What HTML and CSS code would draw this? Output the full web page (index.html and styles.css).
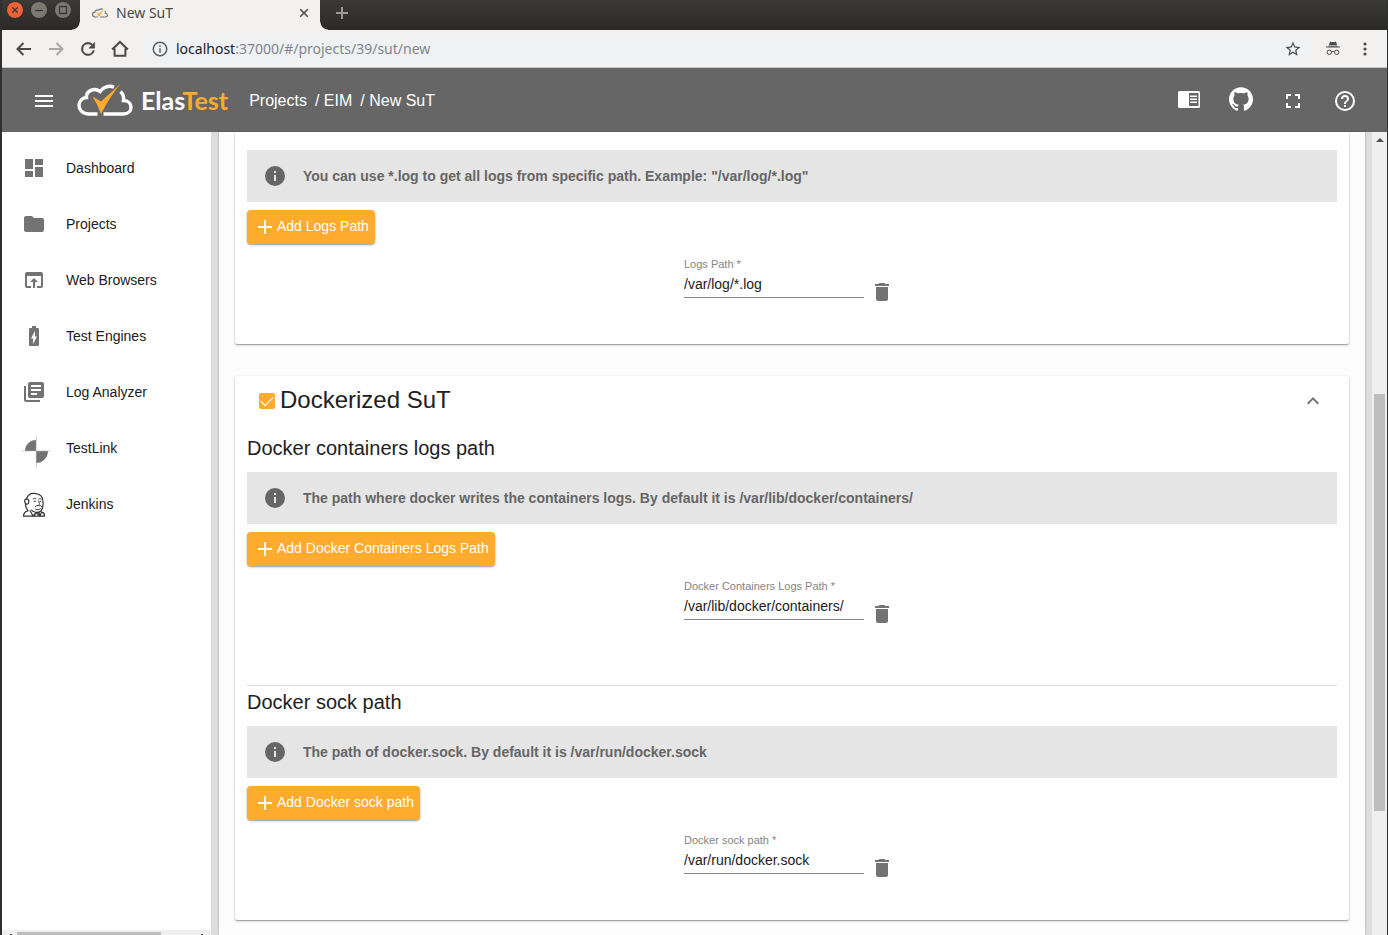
FILE: index.html
```html
<!DOCTYPE html>
<html lang="en">
<head>
<meta charset="utf-8">
<title>New SuT</title>
<link rel="stylesheet" href="styles.css">
</head>
<body>
<div class="window">
  <header class="titlebar">
    <div class="window-controls">
      <button class="win-btn win-close" aria-label="Close window"><svg viewBox="0 0 16 16"><path d="M5.2 5.2l5.6 5.6M10.8 5.2l-5.6 5.6"/></svg></button>
      <button class="win-btn" aria-label="Minimize"><svg viewBox="0 0 16 16"><path d="M4 8.5h8"/></svg></button>
      <button class="win-btn" aria-label="Maximize"><svg viewBox="0 0 16 16"><path d="M4.5 4.5h7v7h-7z"/></svg></button>
    </div>
    <div class="tab">
      <svg class="favicon" viewBox="0 0 56 34"><path d="M20 31H12C5 31 2 26 2 22c0-5 4-8 8-8 0-6 7-10 13-7C27 3 33 2 38 3M45 9c2 3 3 6 2 9 5 0 7 4 7 7 0 4-4 6-7 6H28" fill="none" stroke="#777" stroke-width="4"/><path d="M15 13l9 7L44 0 24 31z" fill="#ffab2e"/></svg>
      <span class="tab-title">New SuT</span>
      <button class="tab-close" aria-label="Close tab"><svg viewBox="0 0 10 10"><path d="M1.2 1.2l7.6 7.6M8.8 1.2L1.2 8.8"/></svg></button>
    </div>
    <button class="tab-new" aria-label="New tab"><svg viewBox="0 0 12 12"><path d="M6 0v12M0 6h12"/></svg></button>
  </header>

  <div class="toolbar">
    <button class="nav-btn" aria-label="Back"><svg viewBox="0 0 24 24"><path d="M20.500 10.700H7.200l5-5L10.500 4l-8 8 8 8 1.700-1.700-5-5h13.300z"/></svg></button>
    <button class="nav-btn disabled" aria-label="Forward" disabled><svg viewBox="0 0 24 24"><path d="M3.500 10.700h13.300l-5-5L13.500 4l8 8-8 8-1.700-1.700 5-5H3.500z"/></svg></button>
    <button class="nav-btn" aria-label="Reload"><svg viewBox="0 0 24 24"><path stroke="currentColor" stroke-width=".6" d="M17.650 6.350A7.960 7.960 0 0 0 12 4a8 8 0 1 0 7.730 10h-2.080A6 6 0 1 1 12 6c1.660 0 3.140.690 4.220 1.780L13 11h7V4z"/></svg></button>
    <button class="nav-btn" aria-label="Home"><svg viewBox="0 0 24 24"><path d="M2.500 12.500L12 3.500l9.500 9M5.500 11.500V20h13v-8.500" fill="none" stroke="currentColor" stroke-width="2.400"/></svg></button>
    <div class="address">
      <svg class="address-info" viewBox="0 0 24 24"><path d="M11 7h2v2h-2zm0 4h2v6h-2zm1-9a10 10 0 1 0 0 20 10 10 0 0 0 0-20zm0 18a8 8 0 1 1 0-16 8 8 0 0 1 0 16z"/></svg>
      <span class="url"><span class="url-host">localhost</span>:37000/#/projects/39/sut/new</span>
      <button class="star" aria-label="Bookmark"><svg viewBox="0 0 24 24"><path d="M22 9.240l-7.190-.620L12 2 9.190 8.630 2 9.240l5.460 4.730L5.820 21 12 17.270 18.180 21l-1.630-7.030zM12 15.400l-3.760 2.270 1-4.280-3.320-2.880 4.380-.380L12 6.100l1.710 4.040 4.380.380-3.320 2.880 1 4.280z"/></svg></button>
    </div>
    <svg class="incognito" viewBox="0 0 16 16"><path d="M5 .5l1.800.8L8 .9l1.200.4L11 .5l1 3.500H4zM1 5.500h14v1H1z"/><path d="M3.500 4.600h9v1h-9z"/><g fill="none" stroke="currentColor"><circle cx="4.300" cy="11.300" r="2.200"/><circle cx="11.700" cy="11.300" r="2.200"/><path d="M6.500 10.800q1.500-.8 3 0"/></g></svg>
    <button class="chrome-menu" aria-label="Browser menu"><svg viewBox="0 0 4 16"><circle cx="2" cy="3" r="1.600"/><circle cx="2" cy="8" r="1.600"/><circle cx="2" cy="13" r="1.600"/></svg></button>
  </div>

  <div class="appbar">
    <button class="icon-btn" aria-label="Toggle menu"><svg viewBox="0 0 24 24"><path d="M3 18h18v-2H3zm0-5h18v-2H3zm0-7v2h18V6z"/></svg></button>
    <a class="logo" href="#">
      <svg class="logo-mark" viewBox="0 0 56 34"><path d="M20.500 31H12C5 31 2 26 2 22.500 2 18 5.500 14.500 9.500 14.500 9 8 17 4 23 8.500 26 4 32 2 37 4.200M43.500 8.500c3 3 3.500 6 3 9 5 0 7.500 3.500 7.500 7 0 4-3.500 6.500-7.500 6.500H26.500" fill="none" stroke="#fff" stroke-width="3.400"/><path d="M15.500 13.500L24 18.500 44 .5Q33 13 24 31 20.500 21 15.500 13.500z" fill="#ffab2e"/></svg>
      <span class="logo-text">Elas<span class="logo-accent">Test</span></span>
    </a>
    <nav class="breadcrumb" aria-label="Breadcrumb"><a href="#">Projects</a><a href="#">/ EIM</a><a href="#">/ New SuT</a></nav>
    <div class="actions">
      <button class="icon-btn raised" aria-label="Reader"><svg viewBox="0 0 24 24"><path fill-rule="evenodd" d="M2.500 4h19q1.500 0 1.500 1.500v14q0 1.500-1.500 1.500h-19Q1 21 1 19.500v-14Q1 4 2.500 4zM12 6v13h9.500V6zM13 8.500h7V10h-7zm0 3h7V13h-7zm0 3h7V16h-7z"/></svg></button>
      <button class="icon-btn raised" aria-label="GitHub"><svg viewBox="0 0 24 24"><path d="M12 .297c-6.630 0-12 5.373-12 12 0 5.303 3.438 9.800 8.205 11.385.6.113.820-.258.820-.577 0-.285-.010-1.040-.015-2.040-3.338.724-4.042-1.610-4.042-1.610C4.422 18.070 3.633 17.700 3.633 17.700c-1.087-.744.084-.729.084-.729 1.205.084 1.838 1.236 1.838 1.236 1.070 1.835 2.809 1.305 3.495.998.108-.776.417-1.305.760-1.605-2.665-.300-5.466-1.332-5.466-5.930 0-1.310.465-2.380 1.235-3.220-.135-.303-.540-1.523.105-3.176 0 0 1.005-.322 3.300 1.230.960-.267 1.980-.399 3-.405 1.020.006 2.040.138 3 .405 2.280-1.552 3.285-1.230 3.285-1.230.645 1.653.240 2.873.120 3.176.765.840 1.230 1.910 1.230 3.220 0 4.610-2.805 5.625-5.475 5.920.420.360.810 1.096.810 2.220 0 1.606-.015 2.896-.015 3.286 0 .315.210.690.825.570C20.565 22.092 24 17.592 24 12.297c0-6.627-5.373-12-12-12"/></svg></button>
      <button class="icon-btn" aria-label="Fullscreen"><svg viewBox="0 0 24 24"><path d="M7 14H5v5h5v-2H7zM5 10h2V7h3V5H5zm12 7h-3v2h5v-5h-2zM14 5v2h3v3h2V5z"/></svg></button>
      <button class="icon-btn" aria-label="Help"><svg viewBox="0 0 24 24"><path d="M11 18h2v-2h-2zm1-16a10 10 0 1 0 0 20 10 10 0 0 0 0-20zm0 18a8 8 0 1 1 0-16 8 8 0 0 1 0 16zm0-14a4 4 0 0 0-4 4h2a2 2 0 1 1 4 0c0 2-3 1.750-3 5h2c0-2.250 3-2.500 3-5a4 4 0 0 0-4-4z"/></svg></button>
    </div>
  </div>

  <div class="body">
    <aside class="sidebar">
      <nav class="menu">
        <a href="#"><svg viewBox="0 0 24 24"><path d="M3 13h8V3H3zm0 8h8v-6H3zm10 0h8V11h-8zm0-18v6h8V3z"/></svg>Dashboard</a>
        <a href="#"><svg viewBox="0 0 24 24"><path d="M10 4H4a2 2 0 0 0-2 2v12a2 2 0 0 0 2 2h16a2 2 0 0 0 2-2V8a2 2 0 0 0-2-2h-8z"/></svg>Projects</a>
        <a href="#"><svg viewBox="0 0 24 24"><path d="M19 4H5a2 2 0 0 0-2 2v12a2 2 0 0 0 2 2h4v-2H5V8h14v10h-4v2h4a2 2 0 0 0 2-2V6a2 2 0 0 0-2-2zm-7 6l-4 4h3v6h2v-6h3z"/></svg>Web Browsers</a>
        <a href="#"><svg viewBox="0 0 24 24"><path d="M15.670 4H14V2h-4v2H8.330C7.600 4 7 4.600 7 5.330v15.330C7 21.400 7.600 22 8.330 22h7.330c.740 0 1.340-.600 1.340-1.330V5.330C17 4.600 16.400 4 15.670 4zM11 20v-5.500H9L13 7v5.500h2z"/></svg>Test Engines</a>
        <a href="#"><svg viewBox="0 0 24 24"><path d="M4 6H2v14a2 2 0 0 0 2 2h14v-2H4zm16-4H8a2 2 0 0 0-2 2v12a2 2 0 0 0 2 2h12a2 2 0 0 0 2-2V4a2 2 0 0 0-2-2zm-1 9H9V9h10zm-4 4H9v-2h6zm4-8H9V5h10z"/></svg>Log Analyzer</a>
        <a href="#"><svg viewBox="0 0 24 24" overflow="visible"><path d="M14 15V4A11 11 0 0 0 3 15zM14 15v12A12 12 0 0 0 26 15z"/><path d="M0 15h28M14.300 0v32" stroke="#bbb" stroke-width=".6"/></svg>TestLink</a>
        <a href="#"><svg viewBox="0 0 24 24" overflow="visible"><g transform="translate(0 .8)" fill="none" stroke="#333" stroke-width="1.200" stroke-linecap="round"><path d="M6 18C4 15 3 13 3.500 10.500 2 9 2.500 6.500 4.500 6 6 1.500 10 0 14 .8c5 .7 7 4.200 7 8.200.3 4 .4 7-2.500 9.500-3 2-7 1-9-1.200M4.500 6C7 6 7 8 6.500 10M3.500 10.500Q5 12 6.500 10.500M6 18C3 18.500 1.500 20 1.500 23.400h21c.3-2-.5-3.500-3-4"/><path d="M11 6q1.500-1.300 3 0M17 6q1.500-.8 2.500.3M12 8.500h1.500M18 8.500h1M16.500 8q2 3 .5 4.500M13 14q2-2.500 4-1 2-1 3 1M13.500 16.500q2.500 1.500 5-.500" stroke-width=".9"/><path d="M8 18l3 5 3-3 4 3.300 1.500-4M14 20l-2 3M15 20.500l2-.5 1 3" stroke-width="1.200"/></g></svg>Jenkins</a>
      </nav>
      <div class="hscroll"><svg viewBox="0 0 2 1"><path d="M0 0h2v1H0z"/></svg><span class="hthumb"></span><svg viewBox="0 0 2 1"><path d="M0 0h2v1H0z"/></svg></div>
    </aside>

    <main class="content">
      <section class="card card-top">
        <div class="info"><svg viewBox="0 0 24 24"><path d="M12 2a10 10 0 1 0 0 20 10 10 0 0 0 0-20zm1 15h-2v-6h2zm0-8h-2V7h2z"/></svg>You can use *.log to get all logs from specific path. Example: "/var/log/*.log"</div>
        <button class="add"><svg viewBox="0 0 24 24"><path d="M19 14h-6v6h-2v-6H5v-2h6V6h2v6h6z"/></svg>Add Logs Path</button>
        <div class="row">
          <div class="field"><label for="logs">Logs Path *</label><input id="logs" type="text" value="/var/log/*.log"></div>
          <button class="delete" aria-label="Delete"><svg viewBox="0 0 24 24"><path d="M6 19a2 2 0 0 0 2 2h8a2 2 0 0 0 2-2V7H6zM19 4h-3.500l-1-1h-5l-1 1H5v2h14z"/></svg></button>
        </div>
      </section>

      <section class="card">
        <div class="card-head">
          <input type="checkbox" id="dockerized" class="check" checked>
          <label for="dockerized">Dockerized SuT</label>
          <button class="collapse" aria-label="Collapse"><svg viewBox="0 0 24 24"><path d="M12 9l-6 6 1.400 1.400L12 11.800l4.600 4.600L18 15z"/></svg></button>
        </div>
        <div class="group">
          <h2>Docker containers logs path</h2>
          <div class="info"><svg viewBox="0 0 24 24"><path d="M12 2a10 10 0 1 0 0 20 10 10 0 0 0 0-20zm1 15h-2v-6h2zm0-8h-2V7h2z"/></svg>The path where docker writes the containers logs. By default it is /var/lib/docker/containers/</div>
          <button class="add"><svg viewBox="0 0 24 24"><path d="M19 14h-6v6h-2v-6H5v-2h6V6h2v6h6z"/></svg>Add Docker Containers Logs Path</button>
          <div class="row">
            <div class="field"><label for="containers">Docker Containers Logs Path *</label><input id="containers" type="text" value="/var/lib/docker/containers/"></div>
            <button class="delete" aria-label="Delete"><svg viewBox="0 0 24 24"><path d="M6 19a2 2 0 0 0 2 2h8a2 2 0 0 0 2-2V7H6zM19 4h-3.500l-1-1h-5l-1 1H5v2h14z"/></svg></button>
          </div>
        </div>
        <div class="group">
          <h2>Docker sock path</h2>
          <div class="info"><svg viewBox="0 0 24 24"><path d="M12 2a10 10 0 1 0 0 20 10 10 0 0 0 0-20zm1 15h-2v-6h2zm0-8h-2V7h2z"/></svg>The path of docker.sock. By default it is /var/run/docker.sock</div>
          <button class="add"><svg viewBox="0 0 24 24"><path d="M19 14h-6v6h-2v-6H5v-2h6V6h2v6h6z"/></svg>Add Docker sock path</button>
          <div class="row">
            <div class="field"><label for="sock">Docker sock path *</label><input id="sock" type="text" value="/var/run/docker.sock"></div>
            <button class="delete" aria-label="Delete"><svg viewBox="0 0 24 24"><path d="M6 19a2 2 0 0 0 2 2h8a2 2 0 0 0 2-2V7H6zM19 4h-3.500l-1-1h-5l-1 1H5v2h14z"/></svg></button>
          </div>
        </div>
      </section>
    </main>
    <div class="vscroll"><svg viewBox="0 0 8 4"><path d="M0 4l4-4 4 4z"/></svg><span class="vthumb"></span></div>
  </div>
</div>
</body>
</html>
```
FILE: styles.css
```css
* { box-sizing: border-box; }
body { margin: 0; font: 14px/20px "Liberation Sans", Arial, sans-serif; color: #212121; }
button { border: 0; padding: 0; background: none; font: inherit; color: inherit; }
a { color: inherit; text-decoration: none; }
svg { display: block; fill: currentColor; flex: none; }

.window { display: flex; flex-direction: column; height: 100vh; overflow: hidden; border-left: 2px solid #303030; border-right: 1px solid #303030; }

/* Browser chrome */
.titlebar { display: flex; height: 30px; flex: none; background: linear-gradient(#3b3a37, #2b2a28); margin-left: -2px; }
.window-controls { display: flex; gap: 8px; width: 80px; padding: 2px 0 0 7px; }
.win-btn { width: 16px; height: 16px; border-radius: 50%; background: #7b7a72; box-shadow: 0 0 1px #222; }
.win-btn svg { width: 16px; height: 16px; fill: none; stroke: #3a3935; stroke-width: 1.3; }
.win-close { background: #ee6236; }
.tab { display: flex; align-items: center; width: 240px; height: 30px; padding: 0 11px 4px 12px; background: #f2f1f0; color: #4a4a4a; font: 14px/20px "Noto Sans", sans-serif; position: relative; }
.tab::before, .tab::after { content: ""; position: absolute; bottom: 0; width: 8px; height: 8px; }
.tab::before { right: 100%; background: radial-gradient(circle at 0 0, #2d2c2a 7px, #f2f1f0 8px); }
.tab::after { left: 100%; background: radial-gradient(circle at 100% 0, #2d2c2a 7px, #f2f1f0 8px); }
.favicon { width: 16px; height: 12px; margin-right: 8px; }
.tab-title { flex: 1; }
.tab-close svg { width: 10px; height: 10px; stroke: #505050; stroke-width: 1.6; }
.tab-new { margin: 0 0 4px 16px; }
.tab-new svg { width: 12px; height: 12px; stroke: #9a9a96; stroke-width: 2; }
.toolbar { display: flex; align-items: center; height: 38px; flex: none; padding: 0 20px 0 12px; background: #f2f1f0; border-bottom: 1px solid #c8c8c8; color: #4a4a4a; }
.nav-btn { width: 20px; margin-right: 12px; }
.nav-btn svg { width: 20px; height: 20px; }
.disabled { color: #a8a8a8; }
.address { display: flex; align-items: center; flex: 1; height: 28px; padding: 0 9px; border-radius: 14px; background: #f0f1f3; }
.address-info { width: 18px; height: 18px; color: #5a5d61; margin-right: 7px; }
.url { flex: 1; font: 14px/20px "Noto Sans", sans-serif; color: #80868b; }
.url-host { color: #202124; }
.star svg { width: 18px; height: 18px; }
.incognito { width: 16px; height: 16px; margin: 0 22px 0 14px; }
.chrome-menu svg { width: 4px; height: 16px; }

/* Application bar */
.appbar { display: flex; align-items: center; height: 64px; flex: none; padding: 2px 30px 0; background: #666; color: #fff; }
.icon-btn svg { width: 24px; height: 24px; }
.raised { padding-bottom: 4px; }
.logo { display: flex; align-items: center; margin: 0 21px; padding-bottom: 2px; }
.logo-mark { width: 56px; height: 34px; margin-right: 8px; }
.logo-text { font: bold 25px/28px Lato, sans-serif; }
.logo-accent { color: #ffab2e; }
.breadcrumb { display: flex; gap: 8px; font-size: 16px; }
.actions { display: flex; align-items: center; gap: 28px; margin-left: auto; }

/* Page body */
.body { display: flex; flex: 1; min-height: 0; background: #ddd; }
.sidebar { display: flex; flex-direction: column; width: 209px; flex: none; background: #fefefe; }
.menu { flex: 1; padding-top: 8px; }
.menu a { display: flex; align-items: center; gap: 20px; height: 56px; padding-left: 20px; }
.menu svg { width: 24px; height: 24px; color: #737373; }
.hscroll { display: flex; justify-content: space-between; align-items: flex-end; height: 5px; padding: 0 8px; background: #efefef; color: #505050; }
.hscroll svg { width: 2px; height: 1px; }
.hthumb { width: 144px; height: 3px; margin: 0 auto 0 5px; background: #bdbdbd; }
.content { flex: 1; margin: 0 7px 0 8px; padding: 0 16px; overflow: hidden; background: #fdfdfd; box-shadow: 0 0 2px rgba(0,0,0,.3); }
.card { margin-bottom: 32px; padding: 0 12px 34px; background: #fefefe; border-radius: 2px; box-shadow: 0 1px 1px rgba(0,0,0,.28), 0 1px 3px rgba(0,0,0,.2); }
.card-top { padding-top: 18px; }
.card-head { display: flex; align-items: center; height: 48px; padding: 0 12px; font-size: 24px; }
.check { appearance: none; width: 16px; height: 16px; margin: 2px 5px 0 0; border-radius: 2px; background: #ffab2e; display: grid; justify-items: center; align-items: start; padding-top: 3px; }
.check:checked::after { content: ""; width: 11px; height: 6px; border: solid #fff; border-width: 0 0 1px 1px; transform: rotate(-45deg); }
.collapse { margin-left: auto; color: #757575; }
.collapse svg { width: 24px; height: 24px; }
h2 { margin: 0; font: 20px/32px "Liberation Sans", Arial, sans-serif; padding: 8px 0; }
.group + .group { margin-top: 53px; border-top: 1px solid #d8d8d8; }
.group + .group h2 { padding-top: 0; }
.info { display: flex; align-items: center; gap: 16px; min-height: 52px; padding: 0 16px; background: #e5e5e5; color: #666; font-weight: bold; }
.info svg { width: 24px; height: 24px; }
.add { display: flex; align-items: center; height: 34px; margin-top: 8px; padding: 0 6px 2px; border-radius: 4px; background: #ffab2e; color: #fff; box-shadow: 0 1px 2px rgba(0,0,0,.4); }
.add svg { width: 24px; height: 24px; }
.row { display: flex; justify-content: center; align-items: flex-end; padding-top: 12px; }
.field { width: 180px; margin-bottom: 12px; }
.field label { display: block; font-size: 11px; line-height: 16px; color: #858585; }
.field input { display: block; width: 100%; height: 26px; padding: 0 0 2px; border: 0; border-bottom: 1px solid #858585; background: none; font: inherit; color: #212121; }
.delete { display: grid; place-items: center; width: 36px; height: 36px; color: #737373; }
.delete svg { width: 24px; height: 24px; }

.vscroll { display: flex; flex-direction: column; align-items: center; width: 15px; padding-top: 6px; background: #efefef; color: #505050; }
.vscroll svg { width: 8px; height: 4px; }
.vthumb { width: 11px; flex: 0 0 417px; margin-top: 252px; background: #bdbdbd; }
```
